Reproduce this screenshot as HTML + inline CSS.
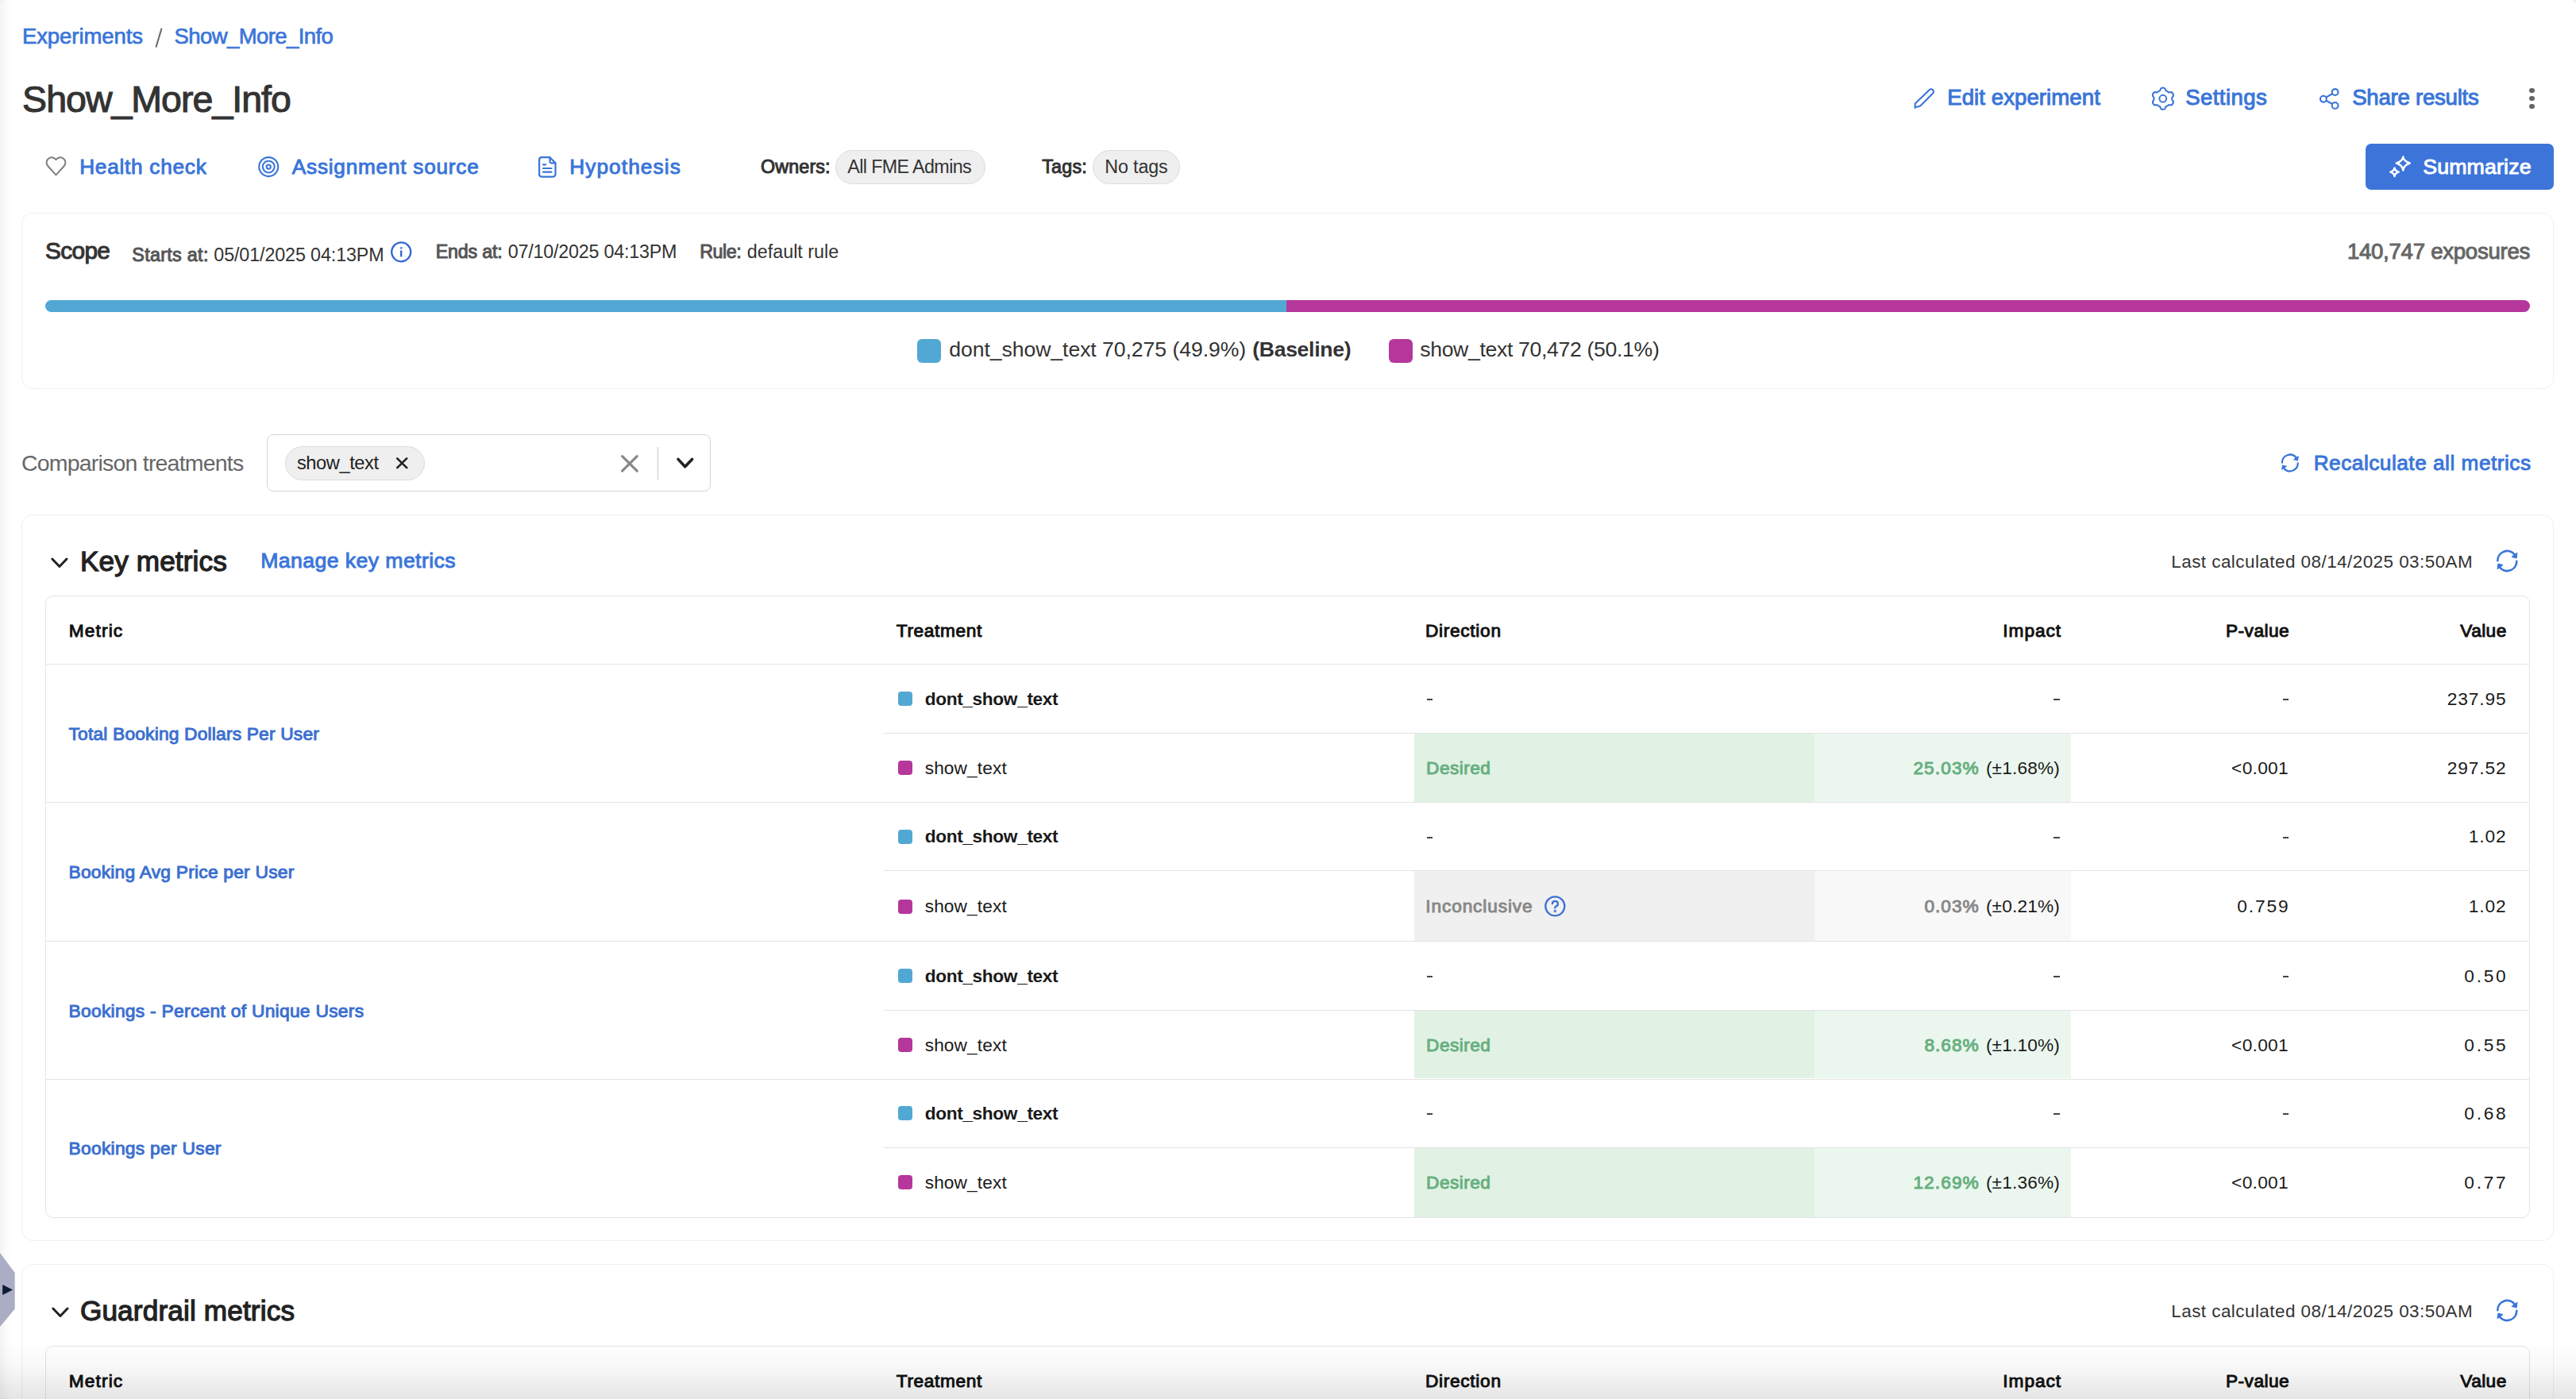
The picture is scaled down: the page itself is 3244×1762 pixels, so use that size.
<!DOCTYPE html>
<html><head><meta charset="utf-8"><title>Show_More_Info</title>
<style>
html,body{margin:0;padding:0;}
body{width:3244px;height:1762px;position:relative;overflow:hidden;background:#fff;font-family:"Liberation Sans", sans-serif;}
.t{position:absolute;white-space:pre;line-height:normal;}
.a{position:absolute;box-sizing:border-box;}
svg.i{position:absolute;overflow:visible;}
</style></head><body>
<!-- left edge shade -->
<div class="a" style="left:0;top:0;width:16px;height:1762px;background:linear-gradient(to right,#f4f4f4,#fbfbfb 50%,#fff)"></div>

<svg class="i" style="left:0;top:0" width="10" height="10" viewBox="0 0 10 10"><path d="M0 0 H8 A8 8 0 0 0 0 8 Z" fill="#f1f1f1"/></svg>
<svg class="i" style="left:3234px;top:0" width="10" height="10" viewBox="0 0 10 10"><path d="M2 0 H10 V8 A8 8 0 0 0 2 0 Z" fill="#f1f1f1"/></svg>
<!-- header icons -->
<svg class="i" style="left:190px;top:30px" width="20" height="34" viewBox="0 0 20 34"><path d="M13.6 5.6 L6.4 29.6" stroke="#6a6a6a" stroke-width="2"/></svg>
<svg class="i" style="left:57px;top:197px" width="27" height="25" viewBox="0 0 27 25"><path d="M13.5 4.2 C11.2 1.3 7.6 0.6 4.6 2.3 C1.3 4.3 0.6 8.9 3.2 12 L13.5 23.4 L23.8 12 C26.4 8.9 25.7 4.3 22.4 2.3 C19.4 0.6 15.8 1.3 13.5 4.2 Z" fill="none" stroke="#808080" stroke-width="2" stroke-linejoin="round"/></svg>
<svg class="i" style="left:325px;top:196.5px" width="27" height="27" viewBox="0 0 27 27" fill="none" stroke="#3a75d9" stroke-width="2.1"><circle cx="13.25" cy="13.1" r="12"/><circle cx="13.25" cy="13.1" r="7.4"/><circle cx="13.25" cy="13.1" r="2.6"/></svg>
<svg class="i" style="left:678px;top:196.5px" width="23" height="27" viewBox="0 0 23 27" fill="none" stroke="#3a75d9" stroke-width="2.2" stroke-linejoin="round" stroke-linecap="round"><path d="M4 1.2 H14.5 L21.5 8.2 V22.5 A3.2 3.2 0 0 1 18.3 25.7 H4.3 A3.2 3.2 0 0 1 1.1 22.5 V4.3 A3.1 3.1 0 0 1 4 1.2 Z"/><path d="M14.5 1.5 V6.5 A1.8 1.8 0 0 0 16.3 8.3 H21.2"/><path d="M6 10.3 H9.2 M6 15 H16.5 M6 19.6 H16.5"/></svg>

<!-- owners / tags chips -->
<div class="a" style="left:1052px;top:189px;width:189px;height:43px;background:#efefef;border:1.5px solid #dcdcdc;border-radius:22px"></div>
<div class="a" style="left:1376px;top:189px;width:110px;height:43px;background:#efefef;border:1.5px solid #dcdcdc;border-radius:22px"></div>

<!-- top right icons -->
<svg class="i" style="left:2410px;top:110px" width="27" height="28" viewBox="0 0 27 28" fill="none" stroke="#3a75d9" stroke-width="2.1" stroke-linejoin="round"><path d="M19.3 3.2 A3.1 3.1 0 0 1 23.7 7.6 L7.8 23.5 L2.1 25.1 L1.3 25.8 L1.3 20.6 L19.3 3.2 Z" transform="translate(0.4,0)"/></svg>
<svg class="i" style="left:2709.5px;top:109px" width="28" height="30" viewBox="0 0 28 30" fill="none" stroke="#3a75d9" stroke-width="2" stroke-linejoin="round"><path d="M11.2 2.5 Q13.7 0.6 16.4 2.5 L17.4 5.2 Q19.6 6.2 21.3 7.4 L24.2 6.9 Q26.9 8.4 27 11.6 L25.2 14.1 Q25.4 15.2 25.2 16.4 L27 18.9 Q26.9 22.1 24.2 23.6 L21.3 23.1 Q19.6 24.4 17.4 25.3 L16.4 28 Q13.7 29.9 11.2 28 L10.2 25.3 Q8 24.4 6.3 23.1 L3.4 23.6 Q0.7 22.1 0.9 18.9 L2.6 16.4 Q2.4 15.2 2.6 14.1 L0.9 11.6 Q0.7 8.4 3.4 6.9 L6.3 7.4 Q8 6.2 10.2 5.2 Z"/><circle cx="13.8" cy="15.2" r="4.4"/></svg>
<svg class="i" style="left:2921px;top:110.5px" width="25" height="27" viewBox="0 0 25 27" fill="none" stroke="#3a75d9" stroke-width="2.1"><circle cx="19.6" cy="5" r="3.9"/><circle cx="4.9" cy="13.7" r="3.9"/><circle cx="19.6" cy="21.9" r="3.9"/><path d="M8.2 11.7 L16.3 7 M8.2 15.7 L16.3 20"/></svg>
<div class="a" style="left:3185px;top:110.5px;width:6.5px;height:6.5px;border-radius:50%;background:#666"></div>
<div class="a" style="left:3185px;top:120.5px;width:6.5px;height:6.5px;border-radius:50%;background:#666"></div>
<div class="a" style="left:3185px;top:130.5px;width:6.5px;height:6.5px;border-radius:50%;background:#666"></div>

<!-- summarize button -->
<div class="a" style="left:2979px;top:181px;width:237px;height:58px;background:#3d74d9;border-radius:7px"></div>
<svg class="i" style="left:3008px;top:196px" width="29" height="28" viewBox="0 0 29 28" fill="none" stroke="#fff" stroke-width="2.4" stroke-linejoin="round"><path d="M18.3 1.5 Q19.3 7.3 26.8 9.5 Q19.3 11.7 18.3 18.5 Q17.3 11.7 9.8 9.5 Q17.3 7.3 18.3 1.5 Z"/><path d="M7.5 15.5 Q8.1 19.2 12.7 20.6 Q8.1 21.9 7.5 26 Q6.9 21.9 2.3 20.6 Q6.9 19.2 7.5 15.5 Z"/></svg>

<!-- scope card -->
<div class="a" style="left:27px;top:268px;width:3188.5px;height:221.5px;border:1.5px solid #f0f0f0;border-radius:14px"></div>
<svg class="i" style="left:492px;top:304px" width="27" height="27" viewBox="0 0 27 27" fill="none" stroke="#2f66d0" stroke-width="2.3" stroke-linecap="round"><circle cx="13.2" cy="13.3" r="12"/><path d="M13.2 12.3 V18.5"/><circle cx="13.2" cy="8.3" r="0.4" fill="#2f66d0"/></svg>
<div class="a" style="left:57px;top:378px;width:3129px;height:15px;border-radius:7.5px;background:linear-gradient(to right,#52a8d4 0,#52a8d4 1562.6px,#b5379c 1562.6px,#b5379c 100%)"></div>
<div class="a" style="left:1154.7px;top:427px;width:30.3px;height:30px;border-radius:6px;background:#52a8d4"></div>
<div class="a" style="left:1749px;top:427px;width:30.3px;height:30px;border-radius:6px;background:#b5379c"></div>

<!-- comparison select -->
<div class="a" style="left:336.4px;top:547px;width:559px;height:71.5px;border:1.5px solid #d4d4d4;border-radius:8px"></div>
<div class="a" style="left:359.3px;top:562px;width:176px;height:42.6px;background:#efefef;border:1.5px solid #dcdcdc;border-radius:22px"></div>
<svg class="i" style="left:499px;top:576.4px" width="14.5" height="14.5" viewBox="0 0 14.5 14.5" stroke="#222" stroke-width="2.6" stroke-linecap="round"><path d="M1.3 1.3 L13.2 13.2 M13.2 1.3 L1.3 13.2"/></svg>
<svg class="i" style="left:782px;top:573px" width="22" height="22" viewBox="0 0 22 22" stroke="#888" stroke-width="3.2" stroke-linecap="round"><path d="M1.6 1.6 L20.2 20.2 M20.2 1.6 L1.6 20.2"/></svg>
<div class="a" style="left:827.8px;top:563px;width:1.6px;height:41px;background:#c4c4c4"></div>
<svg class="i" style="left:851.5px;top:576px" width="22" height="15" viewBox="0 0 22 15" fill="none" stroke="#222" stroke-width="3.6" stroke-linecap="round" stroke-linejoin="round"><path d="M2 2.4 L10.7 11.8 L19.6 2.4"/></svg>

<!-- recalc -->
<svg class="i" style="left:2872px;top:570.5px" width="24" height="24" viewBox="0 0 30 30"><g fill="none" stroke="#3a75d9" stroke-width="2.8" stroke-linecap="round"><path d="M2.4 14.6 A12.4 12.4 0 0 1 24.4 6.6"/><path d="M27.2 15.4 A12.4 12.4 0 0 1 5.2 23.4"/></g><g fill="#3a75d9" stroke="#3a75d9" stroke-width="1" stroke-linejoin="round"><path d="M28 4.4 L27 11.4 L20.6 9.7 Z"/><path d="M2 25.6 L3 18.6 L9.4 20.3 Z"/></g></svg>

<!-- key metrics card -->
<div class="a" style="left:27px;top:648px;width:3188.5px;height:914.5px;border:1.5px solid #f0f0f0;border-radius:14px"></div>
<svg class="i" style="left:64px;top:702px" width="22" height="14" viewBox="0 0 22 14" fill="none" stroke="#222" stroke-width="3" stroke-linecap="round" stroke-linejoin="round"><path d="M1.8 2 L10.9 11.5 L20 2"/></svg>
<svg class="i" style="left:3143px;top:692px" width="29" height="29" viewBox="0 0 30 30"><g fill="none" stroke="#3a75d9" stroke-width="2.8" stroke-linecap="round"><path d="M2.4 14.6 A12.4 12.4 0 0 1 24.4 6.6"/><path d="M27.2 15.4 A12.4 12.4 0 0 1 5.2 23.4"/></g><g fill="#3a75d9" stroke="#3a75d9" stroke-width="1" stroke-linejoin="round"><path d="M28 4.4 L27 11.4 L20.6 9.7 Z"/><path d="M2 25.6 L3 18.6 L9.4 20.3 Z"/></g></svg>

<!-- key metrics table -->
<div class="a" style="left:57.3px;top:750px;width:3128.5px;height:783.5px;border:1.5px solid #e4e4e4;border-radius:10px;overflow:hidden">
  <div class="a" style="left:-1.5px;top:84.5px;width:3128.5px;height:1.5px;background:#e4e4e4"></div>
  <!-- cell backgrounds -->
  <div class="a" style="left:1723px;top:172px;width:504px;height:86.5px;background:#e1f2e4"></div>
  <div class="a" style="left:2227px;;top:172px;width:323px;height:86.5px;background:#ebf7ee"></div>
  <div class="a" style="left:1723px;top:345px;width:504px;height:88.5px;background:#f0f0f0"></div>
  <div class="a" style="left:2227px;;top:345px;width:323px;height:88.5px;background:#f8f8f8"></div>
  <div class="a" style="left:1723px;top:520.5px;width:504px;height:86.5px;background:#e1f2e4"></div>
  <div class="a" style="left:2227px;;top:520.5px;width:323px;height:86.5px;background:#ebf7ee"></div>
  <div class="a" style="left:1723px;top:694px;width:504px;height:88px;background:#e1f2e4"></div>
  <div class="a" style="left:2227px;;top:694px;width:323px;height:88px;background:#ebf7ee"></div>
  <!-- sub borders -->
  <div class="a" style="left:1055.2px;top:171.5px;width:2100px;height:1.5px;background:#e4e4e4"></div>
  <div class="a" style="left:-1.5px;top:258.5px;width:3128.5px;height:1.5px;background:#e4e4e4"></div>
  <div class="a" style="left:1055.2px;top:344.5px;width:2100px;height:1.5px;background:#e4e4e4"></div>
  <div class="a" style="left:-1.5px;top:433.5px;width:3128.5px;height:1.5px;background:#e4e4e4"></div>
  <div class="a" style="left:1055.2px;top:520.5px;width:2100px;height:1.5px;background:#e4e4e4"></div>
  <div class="a" style="left:-1.5px;top:607.5px;width:3128.5px;height:1.5px;background:#e4e4e4"></div>
  <div class="a" style="left:1055.2px;top:693.5px;width:2100px;height:1.5px;background:#e4e4e4"></div>
</div>
<!-- treatment squares -->
<div class="a" style="left:1131px;top:871px;width:18px;height:18px;border-radius:4px;background:#52a8d4"></div>
<div class="a" style="left:1131px;top:958px;width:18px;height:18px;border-radius:4px;background:#b5379c"></div>
<div class="a" style="left:1131px;top:1044.5px;width:18px;height:18px;border-radius:4px;background:#52a8d4"></div>
<div class="a" style="left:1131px;top:1132.5px;width:18px;height:18px;border-radius:4px;background:#b5379c"></div>
<div class="a" style="left:1131px;top:1219.5px;width:18px;height:18px;border-radius:4px;background:#52a8d4"></div>
<div class="a" style="left:1131px;top:1306.5px;width:18px;height:18px;border-radius:4px;background:#b5379c"></div>
<div class="a" style="left:1131px;top:1393px;width:18px;height:18px;border-radius:4px;background:#52a8d4"></div>
<div class="a" style="left:1131px;top:1480px;width:18px;height:18px;border-radius:4px;background:#b5379c"></div>
<!-- dashes -->
<div class="a" style="left:1796.5px;top:880px;width:7.5px;height:2.2px;background:#444"></div>
<div class="a" style="left:2586px;top:880px;width:7.5px;height:2.2px;background:#444"></div>
<div class="a" style="left:2874.5px;top:880px;width:7.5px;height:2.2px;background:#444"></div>
<div class="a" style="left:1796.5px;top:1053.5px;width:7.5px;height:2.2px;background:#444"></div>
<div class="a" style="left:2586px;top:1053.5px;width:7.5px;height:2.2px;background:#444"></div>
<div class="a" style="left:2874.5px;top:1053.5px;width:7.5px;height:2.2px;background:#444"></div>
<div class="a" style="left:1796.5px;top:1228.5px;width:7.5px;height:2.2px;background:#444"></div>
<div class="a" style="left:2586px;top:1228.5px;width:7.5px;height:2.2px;background:#444"></div>
<div class="a" style="left:2874.5px;top:1228.5px;width:7.5px;height:2.2px;background:#444"></div>
<div class="a" style="left:1796.5px;top:1402px;width:7.5px;height:2.2px;background:#444"></div>
<div class="a" style="left:2586px;top:1402px;width:7.5px;height:2.2px;background:#444"></div>
<div class="a" style="left:2874.5px;top:1402px;width:7.5px;height:2.2px;background:#444"></div>
<!-- question icon -->
<svg class="i" style="left:1945px;top:1128px" width="27" height="27" viewBox="0 0 27 27" fill="none" stroke="#3a6fd6" stroke-width="2.3" stroke-linecap="round"><circle cx="13.3" cy="13.3" r="12"/><path d="M9.9 10.2 A3.5 3.4 0 1 1 14.3 13.5 Q13.3 14 13.3 15.6"/><circle cx="13.3" cy="19.5" r="0.5" fill="#3a6fd6"/></svg>

<!-- guardrail card -->
<div class="a" style="left:27px;top:1592px;width:3188.5px;height:300px;border:1.5px solid #f0f0f0;border-radius:14px"></div>
<svg class="i" style="left:64.5px;top:1646px" width="22" height="14" viewBox="0 0 22 14" fill="none" stroke="#222" stroke-width="3" stroke-linecap="round" stroke-linejoin="round"><path d="M1.8 2 L10.9 11.5 L20 2"/></svg>
<svg class="i" style="left:3143px;top:1636px" width="29" height="29" viewBox="0 0 30 30"><g fill="none" stroke="#3a75d9" stroke-width="2.8" stroke-linecap="round"><path d="M2.4 14.6 A12.4 12.4 0 0 1 24.4 6.6"/><path d="M27.2 15.4 A12.4 12.4 0 0 1 5.2 23.4"/></g><g fill="#3a75d9" stroke="#3a75d9" stroke-width="1" stroke-linejoin="round"><path d="M28 4.4 L27 11.4 L20.6 9.7 Z"/><path d="M2 25.6 L3 18.6 L9.4 20.3 Z"/></g></svg>
<div class="a" style="left:57.3px;top:1694.5px;width:3128.5px;height:300px;border:1.5px solid #e4e4e4;border-radius:10px"></div>

<!-- left hexagon tab -->
<svg class="i" style="left:0;top:1576px" width="20" height="98" viewBox="0 0 20 98"><path d="M0 2 L18.7 27 L18.7 72.5 L0 95 Z" fill="#abadc4"/><path d="M3.2 42 L16 48.5 L3.2 55 Z" fill="#101a33"/></svg>

<!-- bottom fade -->
<div class="a" style="left:0;top:1688px;width:3244px;height:74px;background:linear-gradient(to bottom,rgba(0,0,0,0),rgba(0,0,0,0.025) 40%,rgba(0,0,0,0.1));z-index:5"></div>

<div class='t' style='left:27.9px;top:30.0px;color:#3a75d9;font-size:27.5px;font-weight:400;letter-spacing:-0.069px;-webkit-text-stroke:0.7px #3a75d9;'>Experiments</div>
<div class='t' style='left:219.6px;top:30.0px;color:#3a75d9;font-size:27.5px;font-weight:400;letter-spacing:-0.589px;-webkit-text-stroke:0.7px #3a75d9;'>Show_More_Info</div>
<div class='t' style='left:28.1px;top:98.0px;color:#333;font-size:46.5px;font-weight:400;letter-spacing:-0.981px;-webkit-text-stroke:1.1px #333;'>Show_More_Info</div>
<div class='t' style='left:100.2px;top:195.0px;color:#3a75d9;font-size:26.2px;font-weight:400;letter-spacing:0.744px;-webkit-text-stroke:0.94px #3a75d9;'>Health check</div>
<div class='t' style='left:367.8px;top:195.0px;color:#3a75d9;font-size:26.2px;font-weight:400;letter-spacing:0.767px;-webkit-text-stroke:0.94px #3a75d9;'>Assignment source</div>
<div class='t' style='left:717.2px;top:195.0px;color:#3a75d9;font-size:26.2px;font-weight:400;letter-spacing:1.114px;-webkit-text-stroke:0.94px #3a75d9;'>Hypothesis</div>
<div class='t' style='left:958.1px;top:197.3px;color:#333;font-size:23.3px;font-weight:400;letter-spacing:0.108px;-webkit-text-stroke:1.0px #333;'>Owners:</div>
<div class='t' style='left:1067.3px;top:197.3px;color:#333;font-size:23.3px;font-weight:400;letter-spacing:-0.617px;'>All FME Admins</div>
<div class='t' style='left:1312.3px;top:197.3px;color:#333;font-size:23.3px;font-weight:400;letter-spacing:0.178px;-webkit-text-stroke:1.0px #333;'>Tags:</div>
<div class='t' style='left:1391.3px;top:197.3px;color:#333;font-size:23.3px;font-weight:400;letter-spacing:-0.150px;'>No tags</div>
<div class='t' style='left:2452.2px;top:107.0px;color:#3a75d9;font-size:27.6px;font-weight:400;letter-spacing:0.067px;-webkit-text-stroke:0.99px #3a75d9;'>Edit experiment</div>
<div class='t' style='left:2752.2px;top:107.0px;color:#3a75d9;font-size:27.6px;font-weight:400;letter-spacing:0.420px;-webkit-text-stroke:0.99px #3a75d9;'>Settings</div>
<div class='t' style='left:2962.2px;top:107.0px;color:#3a75d9;font-size:27.6px;font-weight:400;letter-spacing:-0.244px;-webkit-text-stroke:0.99px #3a75d9;'>Share results</div>
<div class='t' style='left:3051.2px;top:195.3px;color:#fff;font-size:26.7px;font-weight:400;letter-spacing:0.181px;-webkit-text-stroke:0.96px #fff;'>Summarize</div>
<div class='t' style='left:57.1px;top:299.0px;color:#333;font-size:29.8px;font-weight:400;letter-spacing:-0.678px;-webkit-text-stroke:1.07px #333;'>Scope</div>
<div class='t' style='left:166.3px;top:308.0px;color:#555;font-size:23.3px;font-weight:400;letter-spacing:0.318px;-webkit-text-stroke:1.0px #555;'>Starts at:</div>
<div class='t' style='left:269.3px;top:308.0px;color:#333;font-size:23.3px;font-weight:400;letter-spacing:-0.114px;'>05/01/2025 04:13PM</div>
<div class='t' style='left:548.8px;top:303.7px;color:#555;font-size:23.3px;font-weight:400;letter-spacing:-0.227px;-webkit-text-stroke:1.0px #555;'>Ends at:</div>
<div class='t' style='left:639.8px;top:303.7px;color:#333;font-size:23.3px;font-weight:400;letter-spacing:-0.214px;'>07/10/2025 04:13PM</div>
<div class='t' style='left:881.3px;top:303.7px;color:#555;font-size:23.3px;font-weight:400;letter-spacing:-0.498px;-webkit-text-stroke:1.0px #555;'>Rule:</div>
<div class='t' style='left:940.8px;top:303.7px;color:#333;font-size:23.3px;font-weight:400;letter-spacing:0.011px;'>default rule</div>
<div class='t' style='left:2955.9px;top:300.5px;color:#666;font-size:27.6px;font-weight:400;letter-spacing:-0.271px;-webkit-text-stroke:0.99px #666;'>140,747 exposures</div>
<div class='t' style='left:1195.2px;top:424.8px;color:#333;font-size:26.6px;font-weight:400;letter-spacing:-0.055px;'>dont_show_text 70,275 (49.9%)</div>
<div class='t' style='left:1577.2px;top:424.8px;color:#333;font-size:26.6px;font-weight:700;letter-spacing:-0.301px;'>(Baseline)</div>
<div class='t' style='left:1788.2px;top:424.8px;color:#333;font-size:26.6px;font-weight:400;letter-spacing:-0.321px;'>show_text 70,472 (50.1%)</div>
<div class='t' style='left:27.0px;top:566.5px;color:#666;font-size:28.5px;font-weight:400;letter-spacing:-0.800px;'>Comparison treatments</div>
<div class='t' style='left:373.9px;top:570.4px;color:#222;font-size:23.7px;font-weight:400;letter-spacing:-0.429px;'>show_text</div>
<div class='t' style='left:2913.7px;top:567.8px;color:#3a75d9;font-size:26.2px;font-weight:400;letter-spacing:0.518px;-webkit-text-stroke:0.94px #3a75d9;'>Recalculate all metrics</div>
<div class='t' style='left:100.9px;top:686.5px;color:#222;font-size:35.2px;font-weight:400;letter-spacing:0.112px;-webkit-text-stroke:1.27px #222;'>Key metrics</div>
<div class='t' style='left:328.2px;top:691.0px;color:#3a75d9;font-size:26.7px;font-weight:400;letter-spacing:0.389px;-webkit-text-stroke:0.96px #3a75d9;'>Manage key metrics</div>
<div class='t' style='left:2734.3px;top:694.6px;color:#333;font-size:22.4px;font-weight:400;letter-spacing:0.480px;'>Last calculated 08/14/2025 03:50AM</div>
<div class='t' style='left:86.8px;top:781.0px;color:#111;font-size:22.7px;font-weight:400;letter-spacing:1.119px;-webkit-text-stroke:0.98px #111;'>Metric</div>
<div class='t' style='left:1128.8px;top:781.0px;color:#111;font-size:22.7px;font-weight:400;letter-spacing:0.625px;-webkit-text-stroke:0.98px #111;'>Treatment</div>
<div class='t' style='left:1794.9px;top:781.0px;color:#111;font-size:22.7px;font-weight:400;letter-spacing:0.704px;-webkit-text-stroke:0.98px #111;'>Direction</div>
<div class='t' style='left:2522.3px;top:781.0px;color:#111;font-size:22.7px;font-weight:400;letter-spacing:0.954px;-webkit-text-stroke:0.98px #111;'>Impact</div>
<div class='t' style='left:2803.0px;top:781.0px;color:#111;font-size:22.7px;font-weight:400;letter-spacing:0.454px;-webkit-text-stroke:0.98px #111;'>P-value</div>
<div class='t' style='left:3098.3px;top:781.0px;color:#111;font-size:22.7px;font-weight:400;letter-spacing:0.405px;-webkit-text-stroke:0.98px #111;'>Value</div>
<div class='t' style='left:100.9px;top:1631.0px;color:#222;font-size:35.2px;font-weight:400;letter-spacing:0.139px;-webkit-text-stroke:1.27px #222;'>Guardrail metrics</div>
<div class='t' style='left:2734.3px;top:1639.1px;color:#333;font-size:22.4px;font-weight:400;letter-spacing:0.480px;'>Last calculated 08/14/2025 03:50AM</div>
<div class='t' style='left:86.8px;top:1725.5px;color:#111;font-size:22.7px;font-weight:400;letter-spacing:1.119px;-webkit-text-stroke:0.98px #111;'>Metric</div>
<div class='t' style='left:1128.8px;top:1725.5px;color:#111;font-size:22.7px;font-weight:400;letter-spacing:0.625px;-webkit-text-stroke:0.98px #111;'>Treatment</div>
<div class='t' style='left:1794.9px;top:1725.5px;color:#111;font-size:22.7px;font-weight:400;letter-spacing:0.704px;-webkit-text-stroke:0.98px #111;'>Direction</div>
<div class='t' style='left:2522.3px;top:1725.5px;color:#111;font-size:22.7px;font-weight:400;letter-spacing:0.954px;-webkit-text-stroke:0.98px #111;'>Impact</div>
<div class='t' style='left:2803.0px;top:1725.5px;color:#111;font-size:22.7px;font-weight:400;letter-spacing:0.454px;-webkit-text-stroke:0.98px #111;'>P-value</div>
<div class='t' style='left:3098.3px;top:1725.5px;color:#111;font-size:22.7px;font-weight:400;letter-spacing:0.405px;-webkit-text-stroke:0.98px #111;'>Value</div>
<div class='t' style='left:86.5px;top:910.5px;color:#3b6fd0;font-size:22.8px;font-weight:400;letter-spacing:0.171px;-webkit-text-stroke:0.98px #3b6fd0;'>Total Booking Dollars Per User</div>
<div class='t' style='left:1164.7px;top:866.7px;color:#1a1a1a;font-size:22.7px;font-weight:700;letter-spacing:-0.365px;'>dont_show_text</div>
<div class='t' style='left:1164.7px;top:953.5px;color:#1a1a1a;font-size:22.7px;font-weight:400;letter-spacing:0.113px;'>show_text</div>
<div class='t' style='left:1796.1px;top:953.5px;color:#67af80;font-size:22.7px;font-weight:400;letter-spacing:0.429px;-webkit-text-stroke:0.98px #67af80;'>Desired</div>
<div class='t' style='left:2500.9px;top:953.5px;color:#1a1a1a;font-size:22.7px;font-weight:400;letter-spacing:0.151px;'>(±1.68%)</div>
<div class='t' style='left:2409.4px;top:953.5px;color:#67af80;font-size:22.7px;font-weight:400;letter-spacing:1.082px;-webkit-text-stroke:0.98px #67af80;'>25.03%</div>
<div class='t' style='left:2810.1px;top:953.5px;color:#1a1a1a;font-size:22.7px;font-weight:400;letter-spacing:0.306px;'><0.001</div>
<div class='t' style='left:3081.8px;top:866.7px;color:#1a1a1a;font-size:22.7px;font-weight:400;letter-spacing:0.891px;'>237.95</div>
<div class='t' style='left:3081.8px;top:953.5px;color:#1a1a1a;font-size:22.7px;font-weight:400;letter-spacing:0.891px;'>297.52</div>
<div class='t' style='left:86.5px;top:1085.3px;color:#3b6fd0;font-size:22.8px;font-weight:400;letter-spacing:0.216px;-webkit-text-stroke:0.98px #3b6fd0;'>Booking Avg Price per User</div>
<div class='t' style='left:1164.7px;top:1040.2px;color:#1a1a1a;font-size:22.7px;font-weight:700;letter-spacing:-0.365px;'>dont_show_text</div>
<div class='t' style='left:1164.7px;top:1127.5px;color:#1a1a1a;font-size:22.7px;font-weight:400;letter-spacing:0.113px;'>show_text</div>
<div class='t' style='left:1795.3px;top:1127.5px;color:#888;font-size:22.7px;font-weight:400;letter-spacing:0.864px;-webkit-text-stroke:0.98px #888;'>Inconclusive</div>
<div class='t' style='left:2500.9px;top:1127.5px;color:#1a1a1a;font-size:22.7px;font-weight:400;letter-spacing:0.151px;'>(±0.21%)</div>
<div class='t' style='left:2423.4px;top:1127.5px;color:#888;font-size:22.7px;font-weight:400;letter-spacing:1.005px;-webkit-text-stroke:0.98px #888;'>0.03%</div>
<div class='t' style='left:2817.3px;top:1127.5px;color:#1a1a1a;font-size:22.7px;font-weight:400;letter-spacing:1.895px;'>0.759</div>
<div class='t' style='left:3108.8px;top:1040.2px;color:#1a1a1a;font-size:22.7px;font-weight:400;letter-spacing:0.897px;'>1.02</div>
<div class='t' style='left:3108.8px;top:1127.5px;color:#1a1a1a;font-size:22.7px;font-weight:400;letter-spacing:0.897px;'>1.02</div>
<div class='t' style='left:86.5px;top:1260.0px;color:#3b6fd0;font-size:22.8px;font-weight:400;letter-spacing:0.278px;-webkit-text-stroke:0.98px #3b6fd0;'>Bookings - Percent of Unique Users</div>
<div class='t' style='left:1164.7px;top:1215.7px;color:#1a1a1a;font-size:22.7px;font-weight:700;letter-spacing:-0.365px;'>dont_show_text</div>
<div class='t' style='left:1164.7px;top:1302.5px;color:#1a1a1a;font-size:22.7px;font-weight:400;letter-spacing:0.113px;'>show_text</div>
<div class='t' style='left:1796.1px;top:1302.5px;color:#67af80;font-size:22.7px;font-weight:400;letter-spacing:0.429px;-webkit-text-stroke:0.98px #67af80;'>Desired</div>
<div class='t' style='left:2500.9px;top:1302.5px;color:#1a1a1a;font-size:22.7px;font-weight:400;letter-spacing:0.151px;'>(±1.10%)</div>
<div class='t' style='left:2423.4px;top:1302.5px;color:#67af80;font-size:22.7px;font-weight:400;letter-spacing:1.005px;-webkit-text-stroke:0.98px #67af80;'>8.68%</div>
<div class='t' style='left:2810.1px;top:1302.5px;color:#1a1a1a;font-size:22.7px;font-weight:400;letter-spacing:0.306px;'><0.001</div>
<div class='t' style='left:3103.3px;top:1215.7px;color:#1a1a1a;font-size:22.7px;font-weight:400;letter-spacing:2.730px;'>0.50</div>
<div class='t' style='left:3103.3px;top:1302.5px;color:#1a1a1a;font-size:22.7px;font-weight:400;letter-spacing:2.730px;'>0.55</div>
<div class='t' style='left:86.5px;top:1433.0px;color:#3b6fd0;font-size:22.8px;font-weight:400;letter-spacing:0.277px;-webkit-text-stroke:0.98px #3b6fd0;'>Bookings per User</div>
<div class='t' style='left:1164.7px;top:1389.2px;color:#1a1a1a;font-size:22.7px;font-weight:700;letter-spacing:-0.365px;'>dont_show_text</div>
<div class='t' style='left:1164.7px;top:1476.0px;color:#1a1a1a;font-size:22.7px;font-weight:400;letter-spacing:0.113px;'>show_text</div>
<div class='t' style='left:1796.1px;top:1476.0px;color:#67af80;font-size:22.7px;font-weight:400;letter-spacing:0.429px;-webkit-text-stroke:0.98px #67af80;'>Desired</div>
<div class='t' style='left:2500.9px;top:1476.0px;color:#1a1a1a;font-size:22.7px;font-weight:400;letter-spacing:0.151px;'>(±1.36%)</div>
<div class='t' style='left:2409.4px;top:1476.0px;color:#67af80;font-size:22.7px;font-weight:400;letter-spacing:1.082px;-webkit-text-stroke:0.98px #67af80;'>12.69%</div>
<div class='t' style='left:2810.1px;top:1476.0px;color:#1a1a1a;font-size:22.7px;font-weight:400;letter-spacing:0.306px;'><0.001</div>
<div class='t' style='left:3103.3px;top:1389.2px;color:#1a1a1a;font-size:22.7px;font-weight:400;letter-spacing:2.730px;'>0.68</div>
<div class='t' style='left:3103.3px;top:1476.0px;color:#1a1a1a;font-size:22.7px;font-weight:400;letter-spacing:2.730px;'>0.77</div>
</body></html>
